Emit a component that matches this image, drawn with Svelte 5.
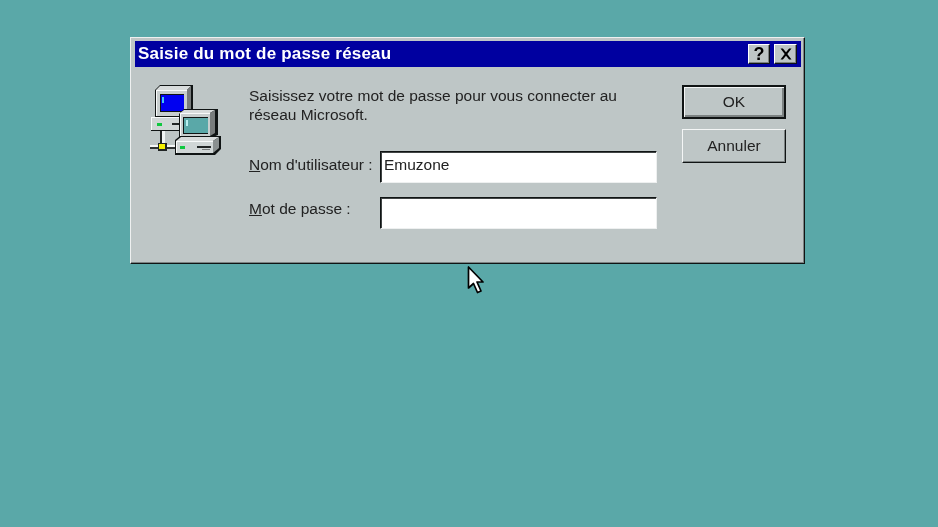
<script>
  const fields = [
    { key: 'N', rest: "om d'utilisateur :", value: 'Emuzone' },
    { key: 'M', rest: 'ot de passe :', value: '' }
  ];
</script>

<div class="desktop">
  <section class="window">
    <header class="titlebar">
      <h1>Saisie du mot de passe réseau</h1>
      <div class="controls">
        <button class="ctl help">?</button>
        <button class="ctl close" aria-label="Fermer">
          <svg width="14" height="12" viewBox="0 0 14 12"><path d="M1.500 0.500h2.400l3.100 3.700 3.100-3.700h2.400L8.300 6l4.200 5.500h-2.400L7 7.800 3.900 11.500H1.500L5.700 6Z" fill="#000"/></svg>
        </button>
      </div>
    </header>
    <div class="body">
      <svg class="icon" width="76" height="76" viewBox="148 82 76 76">
        <!-- cable -->
        <rect x="160" y="128" width="2" height="17" fill="#202424"/>
        <rect x="162" y="128" width="3" height="17" fill="#f0f4f4"/>
        <rect x="150" y="145" width="28" height="2" fill="#f4f6f6"/>
        <rect x="150" y="147" width="28" height="2" fill="#303434"/>
        <rect x="158" y="143" width="9" height="8" fill="#202424"/>
        <rect x="159" y="144" width="6" height="5" fill="#f4f000"/>
        <!-- back computer -->
        <path d="M155 90l5-5h33v28l-5 5h-33z" fill="#101414"/>
        <path d="M156 90l4-4h31l-4 4z" fill="#d8dcdc"/>
        <path d="M187 90l4-4v26l-4 4z" fill="#787c7c"/>
        <path d="M156 90h31v26h-31z" fill="#c8cece"/>
        <path d="M156 90h31v1h-30v25h-1z" fill="#f8fafa"/>
        <rect x="160" y="94" width="24" height="18" fill="#101414"/>
        <rect x="161" y="95" width="23" height="16" fill="#0000f0"/>
        <rect x="162" y="97" width="2" height="6" fill="#40c8f0"/>
        <path d="M151 118h32v13h-32z" fill="#101414"/>
        <path d="M151 117h31v13h-31z" fill="#d0d6d6"/>
        <path d="M151 117h31v1h-30v12h-1z" fill="#f8fafa"/>
        <rect x="157" y="123" width="5" height="3" fill="#10c840"/>
        <rect x="172" y="123" width="10" height="2" fill="#202424"/>
        <!-- front computer -->
        <path d="M179 114l5-5h34v26l-5 2h-34z" fill="#101414"/>
        <path d="M180 113l4-3h31l-5 3z" fill="#d8dcdc"/>
        <path d="M210 113l5-3v23l-5 3z" fill="#787c7c"/>
        <path d="M180 113h30v23h-30z" fill="#c8cece"/>
        <path d="M180 113h30v1h-29v22h-1z" fill="#f8fafa"/>
        <rect x="183" y="117" width="25" height="17" fill="#101414"/>
        <rect x="184" y="118" width="24" height="15" fill="#5aa8a8"/>
        <rect x="186" y="120" width="2" height="6" fill="#b8f0f0"/>
        <path d="M175 140l5-4h41v13l-6 6h-40z" fill="#101414"/>
        <path d="M176 141l5-4h38l-6 4z" fill="#d8dcdc"/>
        <path d="M213 141l6-4v11l-6 5z" fill="#8a9090"/>
        <path d="M176 141h37v12h-37z" fill="#d0d6d6"/>
        <path d="M176 141h37v1h-36v11h-1z" fill="#f8fafa"/>
        <rect x="180" y="146" width="5" height="3" fill="#10c840"/>
        <rect x="197" y="146" width="14" height="2" fill="#202424"/>
        <rect x="202" y="149" width="8" height="1" fill="#787c7c"/>
      </svg>
      <div class="main">
        <p class="intro">Saisissez votre mot de passe pour vous connecter au<br />réseau Microsoft.</p>
        <div class="form">
          {#each fields as f}
            <div class="row">
              <span class="label"><u>{f.key}</u>{f.rest}</span>
              <div class="input">{f.value}</div>
            </div>
          {/each}
        </div>
      </div>
      <div class="actions">
        <button class="btn default"><span>OK</span></button>
        <button class="btn">Annuler</button>
      </div>
    </div>
  </section>
  <svg class="cursor" width="20" height="30" viewBox="0 0 20 30">
    <path d="M1.500 1v21l5-4.500 4 9 3.500-1.500-4-9h6z" fill="#fff" stroke="#000" stroke-width="1.700" stroke-linejoin="round"/>
  </svg>
</div>

<style>
  :global(body) { margin: 0; }
  .desktop {
    position: relative;
    width: 938px;
    height: 527px;
    overflow: hidden;
    background: #5aa8a8;
    padding: 37px 0 0 130px;
    box-sizing: border-box;
    font-family: "Liberation Sans", sans-serif;
    font-size: 15.5px;
    color: #222;
  }
  .window {
    width: 675px;
    height: 227px;
    box-sizing: border-box;
    background: #bec6c6;
    padding: 3px;
    border: 1px solid;
    border-color: #eef0f0 #101414 #101414 #eef0f0;
    box-shadow: inset -1px -1px 0 #7c8282;
    display: flex;
    flex-direction: column;
    filter: blur(0.3px);
  }
  .titlebar {
    height: 26px;
    margin: 0 0 0 1px;
    background: #0000a0;
    color: #fff;
    display: flex;
    align-items: center;
    justify-content: space-between;
    padding: 0 4px 0 3px;
    flex: none;
  }
  h1 {
    margin: 0;
    font-size: 17px;
    font-weight: 700;
    letter-spacing: 0.2px;
  }
  .controls { display: flex; gap: 4px; }
  .ctl {
    width: 23px;
    height: 20px;
    padding: 0;
    background: #bec6c6;
    border: 1px solid;
    border-color: #fff #101414 #101414 #fff;
    box-shadow: inset -1px -1px 0 #7c8282;
    display: flex;
    align-items: center;
    justify-content: center;
    font: 700 18px "Liberation Sans", sans-serif;
    color: #000;
  }
  .help { width: 22px; }
  .body {
    flex: 1;
    display: flex;
  }
  .icon {
    flex: none;
    margin: 15px 0 0 14px;
  }
  .main {
    flex: none;
    width: 410px;
    margin-left: 25px;
  }
  .intro {
    margin: 19px 0 0;
    line-height: 19px;
    white-space: nowrap;
  }
  .form {
    margin-top: 27px;
    display: flex;
    flex-direction: column;
    gap: 14px;
  }
  .row {
    display: flex;
    align-items: center;
    height: 32px;
  }
  .row:first-child .label { position: relative; top: -2px; }
  .row:last-child .label { position: relative; top: -4px; }
  .label {
    width: 131px;
    flex: none;
    white-space: nowrap;
  }
  .input {
    width: 277px;
    height: 32px;
    box-sizing: border-box;
    background: #fff;
    border: 1px solid;
    border-color: #101414 #eef0f0 #eef0f0 #101414;
    box-shadow: inset 1px 1px 0 #404444;
    padding: 0 3px;
    line-height: 26px;
  }
  .actions {
    margin: 18px 0 0 23px;
    display: flex;
    flex-direction: column;
    gap: 10px;
  }
  .btn {
    width: 104px;
    height: 34px;
    padding: 0;
    box-sizing: border-box;
    background: #bec6c6;
    border: 1px solid;
    border-color: #f4f6f6 #101414 #101414 #f4f6f6;
    box-shadow: inset -1px -1px 0 #7c8282;
    font: 15.5px "Liberation Sans", sans-serif;
    color: #222;
  }
  .btn.default {
    border: 2px solid #101414;
    box-shadow: inset 1px 1px 0 #f4f6f6, inset -2px -2px 0 #7c8282;
  }
  .cursor {
    position: absolute;
    left: 467px;
    top: 266px;
  }
</style>
